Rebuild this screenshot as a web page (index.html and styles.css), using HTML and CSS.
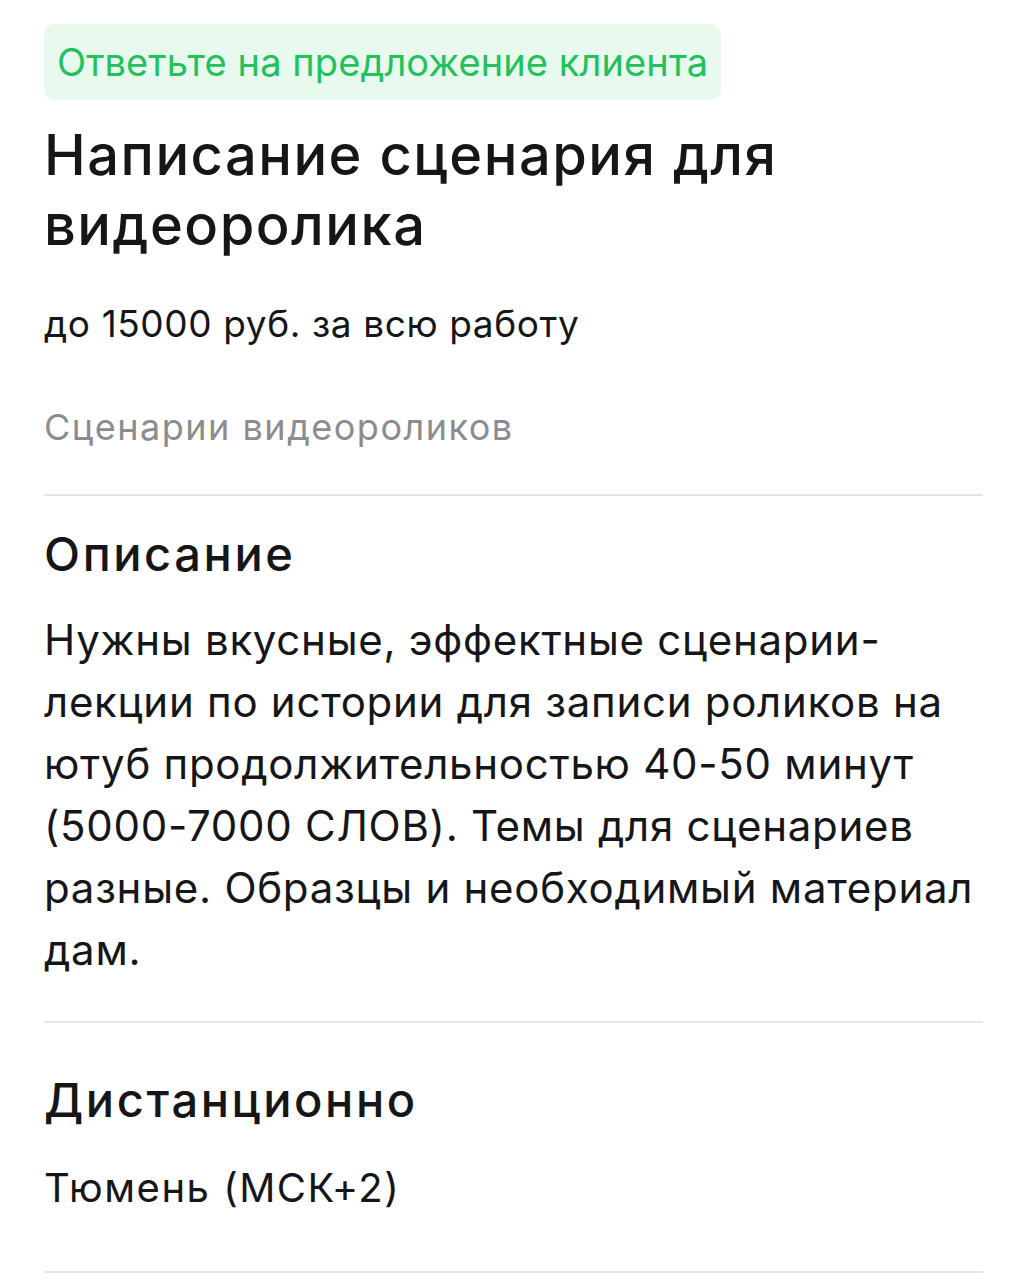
FILE: index.html
```html
<!DOCTYPE html>
<html lang="ru">
<head>
<meta charset="utf-8">
<link rel="stylesheet" href="styles.css">
</head>
<body>
<main class="page">
  <div class="badge">Ответьте на предложение клиента</div>
  <h1 class="title">Написание сценария для видеоролика</h1>
  <p class="price">до 15000 руб. за всю работу</p>
  <p class="category">Сценарии видеороликов</p>
  <hr class="divider">
  <section class="section">
    <h2 class="heading">Описание</h2>
    <p class="body">Нужны вкусные, эффектные сценарии-лекции по истории для записи роликов на ютуб продолжительностью 40-50 минут (5000-7000 СЛОВ). Темы для сценариев разные. Образцы и необходимый материал дам.</p>
  </section>
  <hr class="divider">
  <section class="section loc">
    <h2 class="heading">Дистанционно</h2>
    <p class="city">Тюмень (МСК+2)</p>
  </section>
  <hr class="divider">
</main>
</body>
</html>
```
FILE: styles.css
```css
* { box-sizing: border-box; }
html, body { margin: 0; padding: 0; background: #fff; }
body { font-family: Inter, "Liberation Sans", sans-serif; color: #161618; }
.page { padding: 24px 44px 0 44px; width: 1027px; }
.badge {
  display: inline-block;
  background: #e8f9ee;
  color: #24c05b;
  border-radius: 10px;
  font-size: 38px;
  line-height: 76px;
  height: 76px;
  padding: 0 13px;
  letter-spacing: 0.1px;
  vertical-align: top;
}
.title {
  margin: 20px 0 0 0;
  font-size: 56px;
  line-height: 70px;
  font-weight: 500;
  width: 800px;
  letter-spacing: 1.5px;
}
.price { margin: 39px 0 0 0; font-size: 37px; line-height: 50px; letter-spacing: 0.6px; }
.category { margin: 53px 0 0 0; font-size: 36px; line-height: 50px; color: #8c8c90; letter-spacing: 1.5px; }
.divider { border: 0; height: 2px; background: #e4e4e9; margin: 42px 0 0 0; }
.section { padding-top: 28px; }
.heading { margin: 0; font-size: 47px; line-height: 60px; font-weight: 500; letter-spacing: 2.6px; }
.body { margin: 25px 0 0 0; font-size: 42px; line-height: 62px; letter-spacing: 0.72px; padding-bottom: 40px; }
.section + .divider { margin-top: 0; }
.loc { padding-top: 47px; }
.city { margin: 32px 0 0 0; font-size: 40px; line-height: 52px; letter-spacing: 1.5px; padding-bottom: 57px; }
```
